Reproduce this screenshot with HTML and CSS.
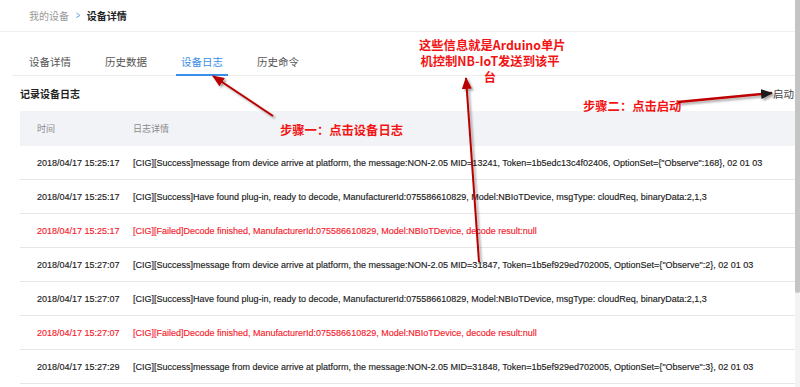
FILE: index.html
```html
<!DOCTYPE html>
<html>
<head>
    <title>设备详情</title>
    <meta charset="utf-8">
    <link rel="stylesheet" href="styles.css">
</head>
<body>
    <div class="page">
        <div class="content">
            <div class="breadcrumb">
                <span class="crumb">我的设备</span>
                <span class="crumb-sep">&gt;</span>
                <span class="crumb-current">设备详情</span>
            </div>

            <div class="tabs">
                <div class="tab">设备详情</div>
                <div class="tab">历史数据</div>
                <div class="tab active">设备日志</div>
                <div class="tab">历史命令</div>
            </div>

            <div class="section-head">
                <span class="section-title">记录设备日志</span>
                <span class="section-action">启动</span>
            </div>

            <div class="log-table">
                <div class="log-row log-header">
                    <span>时间</span>
                    <span>日志详情</span>
                </div>
                <div class="log-row">
                    <span>2018/04/17 15:25:17</span>
                    <span>[CIG][Success]message from device arrive at platform, the message:NON-2.05 MID=13241, Token=1b5edc13c4f02406, OptionSet={"Observe":168}, 02 01 03</span>
                </div>
                <div class="log-row">
                    <span>2018/04/17 15:25:17</span>
                    <span>[CIG][Success]Have found plug-in, ready to decode, ManufacturerId:075586610829, Model:NBIoTDevice, msgType: cloudReq, binaryData:2,1,3</span>
                </div>
                <div class="log-row failed">
                    <span>2018/04/17 15:25:17</span>
                    <span>[CIG][Failed]Decode finished, ManufacturerId:075586610829, Model:NBIoTDevice, decode result:null</span>
                </div>
                <div class="log-row">
                    <span>2018/04/17 15:27:07</span>
                    <span>[CIG][Success]message from device arrive at platform, the message:NON-2.05 MID=31847, Token=1b5ef929ed702005, OptionSet={"Observe":2}, 02 01 03</span>
                </div>
                <div class="log-row">
                    <span>2018/04/17 15:27:07</span>
                    <span>[CIG][Success]Have found plug-in, ready to decode, ManufacturerId:075586610829, Model:NBIoTDevice, msgType: cloudReq, binaryData:2,1,3</span>
                </div>
                <div class="log-row failed">
                    <span>2018/04/17 15:27:07</span>
                    <span>[CIG][Failed]Decode finished, ManufacturerId:075586610829, Model:NBIoTDevice, decode result:null</span>
                </div>
                <div class="log-row">
                    <span>2018/04/17 15:27:29</span>
                    <span>[CIG][Success]message from device arrive at platform, the message:NON-2.05 MID=31848, Token=1b5ef929ed702005, OptionSet={"Observe":3}, 02 01 03</span>
                </div>
            </div>
        </div>
        <div class="scrollbar">
            <div class="scroll-thumb"></div>
        </div>
    </div>

    <!-- annotations drawn over the screenshot -->
    <svg class="arrows" width="800" height="387" viewBox="0 0 800 387">
        <defs>
            <filter id="shadow" x="-20%" y="-20%" width="140%" height="140%">
                <feDropShadow dx="2" dy="2" stdDeviation="1.2" flood-color="#000" flood-opacity="0.35"/>
            </filter>
            <marker id="head-red" viewBox="0 0 12 10" refX="11" refY="5" markerWidth="12" markerHeight="10" markerUnits="userSpaceOnUse" orient="auto">
                <path d="M0,0 L12,5 L0,10 z" fill="#b80000"/>
            </marker>
            <marker id="head-dark" viewBox="0 0 12 10" refX="11" refY="5" markerWidth="12" markerHeight="10" markerUnits="userSpaceOnUse" orient="auto">
                <path d="M0,0 L12,5 L0,10 z" fill="#1a1a1a"/>
            </marker>
        </defs>
        <g filter="url(#shadow)">
            <line x1="273" y1="116" x2="213" y2="76" stroke="#b80000" stroke-width="2" marker-end="url(#head-red)"/>
            <line x1="479" y1="262" x2="466" y2="78" stroke="#b80000" stroke-width="2" marker-end="url(#head-red)"/>
            <line x1="678" y1="102" x2="772" y2="93" stroke="#c00000" stroke-width="2.5" marker-end="url(#head-dark)"/>
        </g>
    </svg>
    <div class="note note-info">这些信息就是Arduino单片<br>机控制NB-IoT发送到该平<br>台</div>
    <div class="note note-step1">步骤一：点击设备日志</div>
    <div class="note note-step2">步骤二：点击启动</div>
</body>
</html>
```

FILE: styles.css
```css
body {
    margin: 0;
    position: relative;
    width: 800px;
    height: 387px;
    overflow: hidden;
    background-color: #fff;
    font-family: "Liberation Sans", "Noto Sans CJK SC", sans-serif;
    color: #333;
}
.page {
    display: flex;
    height: 387px;
}
.content {
    flex: 1;
    min-width: 0;
}
.scrollbar {
    width: 5px;
    background-color: #f3f3f3;
}
.scroll-thumb {
    height: 293px;
    background-color: #c4c4c4;
    border-radius: 0 0 3px 3px;
}

/* breadcrumb */
.breadcrumb {
    height: 31px;
    padding-left: 29px;
    display: flex;
    align-items: center;
    gap: 6px;
    font-family: "Noto Sans CJK SC", sans-serif;
    font-size: 10px;
    border-bottom: 1px solid #efefef;
}
.crumb {
    color: #9a9a9a;
}
.crumb-sep {
    color: #5b9be2;
    font-family: "Liberation Sans", sans-serif;
    transform: scaleX(0.7);
}
.crumb-current {
    color: #222;
    font-weight: 700;
}

/* tabs */
.tabs {
    display: flex;
    gap: 24px;
    margin: 21px 0 0 12px;
    padding-left: 12px;
    border-bottom: 1px solid #ececec;
    font-family: "Noto Sans CJK SC", sans-serif;
    font-size: 10.5px;
}
.tab {
    padding: 0 5px;
    height: 21px;
    line-height: 18px;
    color: #555;
    border-bottom: 2px solid transparent;
    margin-bottom: -1px;
}
.tab.active {
    color: #3a8ee6;
    border-bottom-color: #3a8ee6;
}

/* section title */
.section-head {
    height: 35px;
    padding: 0 1px 0 20px;
    display: flex;
    align-items: center;
    justify-content: space-between;
    font-family: "Noto Sans CJK SC", sans-serif;
    font-size: 10px;
}
.section-title {
    color: #222;
    font-weight: 700;
}
.section-action {
    color: #444;
    font-size: 10.5px;
}

/* log table */
.log-table {
    margin-left: 20px;
}
.log-row {
    display: grid;
    grid-template-columns: 96px 1fr;
    align-items: center;
    height: 33px;
    padding-left: 17px;
    border-bottom: 1px solid #e6e6e6;
    font-size: 9px;
    color: #1c1c1c;
    -webkit-text-stroke: 0.15px currentColor;
    white-space: nowrap;
}
.log-header {
    height: 35px;
    background-color: #f2f3f6;
    border-bottom: none;
    font-family: "Noto Sans CJK SC", sans-serif;
    color: #8a8a8a;
    -webkit-text-stroke: 0;
}
.log-row.failed {
    color: #f5222d;
}

/* red notes */
.arrows {
    position: absolute;
    left: 0;
    top: 0;
    pointer-events: none;
}
.note {
    position: absolute;
    font-family: "Noto Sans CJK SC", sans-serif;
    font-weight: 700;
    color: #f21414;
    font-size: 12.3px;
    line-height: 16px;
    white-space: nowrap;
}
.note-info {
    left: 419px;
    top: 37px;
    width: 142px;
    text-align: center;
}
.note-step1 {
    left: 280px;
    top: 122px;
}
.note-step2 {
    left: 583px;
    top: 98px;
}
```
